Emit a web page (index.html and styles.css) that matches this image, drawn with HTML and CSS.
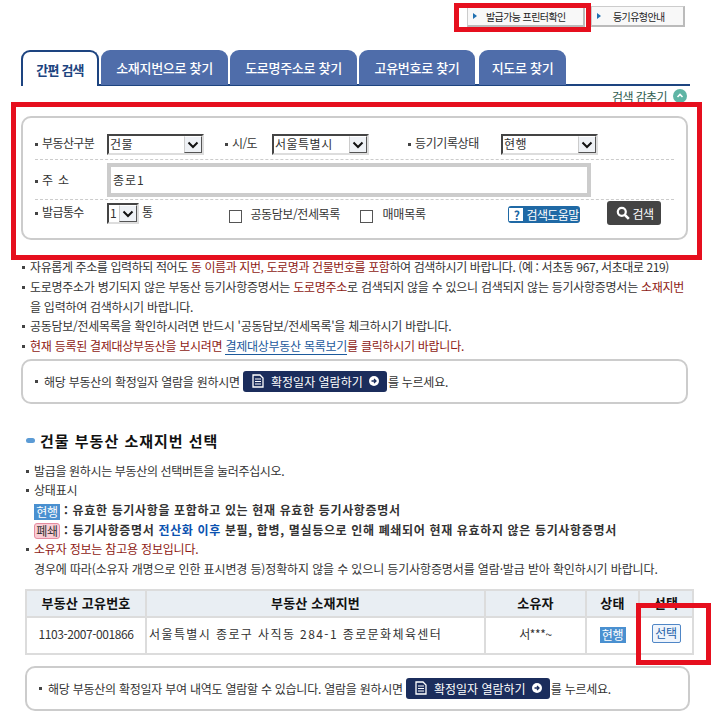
FILE: index.html
```html
<!DOCTYPE html>
<html lang="ko">
<head>
    <meta charset="UTF-8">
    <title>부동산 소재지번 선택</title>
    <link rel="stylesheet" href="styles.css">
</head>
<body>
<div class="page">

    <div class="top-links">
        <a class="top-link link-wide"><i class="mark"></i>발급가능 프린터확인</a>
        <a class="top-link link-narrow"><i class="mark"></i>등기유형안내</a>
    </div>

    <div class="tabs">
        <a class="tab tab-active">간편 검색</a>
        <a class="tab tab-a">소재지번으로 찾기</a>
        <a class="tab tab-a">도로명주소로 찾기</a>
        <a class="tab tab-b">고유번호로 찾기</a>
        <a class="tab tab-c">지도로 찾기</a>
    </div>

    <div class="hide-search">
        <span>검색 감추기</span>
        <svg width="14" height="14" viewBox="0 0 14 14"><circle cx="7" cy="7" r="7" fill="#5fb5a5"/><path d="M4.5 8 L7 5.5 L9.5 8" fill="none" stroke="#fff" stroke-width="1.6"/></svg>
    </div>

    <!-- search form -->
    <div class="search-box">
        <div class="row row-first">
            <span class="lbl lbl-first">부동산구분</span>
            <div class="sel sel-kind"><span>건물</span><b class="arrow"><svg width="12" height="8" viewBox="0 0 12 8"><path d="M1.5 1.5 L6 6 L10.5 1.5" fill="none" stroke="#111" stroke-width="2"/></svg></b></div>
            <span class="lbl lbl-city">시/도</span>
            <div class="sel sel-city"><span>서울특별시</span><b class="arrow"><svg width="12" height="8" viewBox="0 0 12 8"><path d="M1.5 1.5 L6 6 L10.5 1.5" fill="none" stroke="#111" stroke-width="2"/></svg></b></div>
            <span class="lbl lbl-state">등기기록상태</span>
            <div class="sel sel-state"><span>현행</span><b class="arrow"><svg width="12" height="8" viewBox="0 0 12 8"><path d="M1.5 1.5 L6 6 L10.5 1.5" fill="none" stroke="#111" stroke-width="2"/></svg></b></div>
        </div>
        <div class="row row-addr">
            <span class="lbl lbl-first lbl-addr">주 소</span>
            <div class="addr-input">종로1</div>
        </div>
        <div class="row row-last">
            <span class="lbl lbl-first lbl-count">발급통수</span>
            <div class="sel sel-count"><span>1</span><b class="arrow"><svg width="12" height="8" viewBox="0 0 12 8"><path d="M1.5 1.5 L6 6 L10.5 1.5" fill="none" stroke="#111" stroke-width="2"/></svg></b></div>
            <span class="unit">통</span>
            <i class="check check-one"></i>
            <span class="check-text text-one">공동담보/전세목록</span>
            <i class="check check-two"></i>
            <span class="check-text text-two">매매목록</span>
            <a class="help-btn"><b>?</b>검색도움말</a>
            <a class="search-btn"><svg width="14" height="14" viewBox="0 0 14 14"><circle cx="5.8" cy="5.8" r="4" fill="none" stroke="#fff" stroke-width="2.2"/><path d="M8.8 8.8 L12.8 12.8" stroke="#fff" stroke-width="2.6"/></svg>검색</a>
        </div>
    </div>

    <ul class="notes">
        <li class="note-first">자유롭게 주소를 입력하되 적어도 <em>동 이름과 지번, 도로명과 건물번호를 포함</em>하여 검색하시기 바랍니다. (예 : 서초동 967, 서초대로 219)</li>
        <li>도로명주소가 병기되지 않은 부동산 등기사항증명서는 <em>도로명주소</em>로 검색되지 않을 수 있으니 검색되지 않는 등기사항증명서는 <em>소재지번</em><br>을 입력하여 검색하시기 바랍니다.</li>
        <li>공동담보/전세목록을 확인하시려면 반드시 '공동담보/전세목록'을 체크하시기 바랍니다.</li>
        <li><em>현재 등록된 결제대상부동산을 보시려면</em> <a class="plain-link">결제대상부동산 목록보기</a><em>를 클릭하시기 바랍니다.</em></li>
    </ul>

    <div class="info-box info-top">
        <span class="dot"></span>해당 부동산의 확정일자 열람을 원하시면
        <a class="navy-btn"><svg width="14" height="14" viewBox="0 0 14 14"><path d="M2 1 H9 L12 4 V13 H2 Z" fill="none" stroke="#fff" stroke-width="1.3"/><path d="M4 5 H10 M4 7.5 H10 M4 10 H10" stroke="#fff"/></svg>확정일자 열람하기<svg width="10" height="10" viewBox="0 0 10 10"><circle cx="5" cy="5" r="5" fill="#fff"/><path d="M2.5 5 H7 M5 3 L7 5 L5 7" fill="none" stroke="#1b2d5c" stroke-width="1.3"/></svg></a>
        를 누르세요.
    </div>

    <h3 class="section-title"><i class="pill"></i>건물 부동산 소재지번 선택</h3>

    <ul class="status-list">
        <li class="status-first">발급을 원하시는 부동산의 선택버튼을 눌러주십시오.</li>
        <li>상태표시</li>
        <li class="plain-row"><span class="badge badge-live">현행</span> : 유효한 등기사항을 포함하고 있는 현재 유효한 등기사항증명서</li>
        <li class="plain-row"><span class="badge badge-dead">폐쇄</span> : 등기사항증명서 <span class="blue">전산화 이후</span> 분필, 합병, 멸실등으로 인해 폐쇄되어 현재 유효하지 않은 등기사항증명서</li>
        <li><em>소유자 정보는 참고용 정보입니다.</em></li>
        <li class="no-mark status-last">경우에 따라(소유자 개명으로 인한 표시변경 등)정확하지 않을 수 있으니 등기사항증명서를 열람·발급 받아 확인하시기 바랍니다.</li>
    </ul>

    <table class="result">
        <colgroup><col class="c1"><col class="c2"><col class="c3"><col class="c4"><col class="c5"></colgroup>
        <tr>
            <th>부동산 고유번호</th>
            <th>부동산 소재지번</th>
            <th>소유자</th>
            <th>상태</th>
            <th>선택</th>
        </tr>
        <tr>
            <td>1103-2007-001866</td>
            <td class="addr">서울특별시 종로구 사직동 284-1 종로문화체육센터</td>
            <td>서***~</td>
            <td><span class="badge badge-live badge-flat">현행</span></td>
            <td><a class="pick-btn">선택</a></td>
        </tr>
    </table>

    <div class="info-box info-bottom">
        <span class="dot"></span>해당 부동산의 확정일자 부여 내역도 열람할 수 있습니다. 열람을 원하시면
        <a class="navy-btn"><svg width="14" height="14" viewBox="0 0 14 14"><path d="M2 1 H9 L12 4 V13 H2 Z" fill="none" stroke="#fff" stroke-width="1.3"/><path d="M4 5 H10 M4 7.5 H10 M4 10 H10" stroke="#fff"/></svg>확정일자 열람하기<svg width="10" height="10" viewBox="0 0 10 10"><circle cx="5" cy="5" r="5" fill="#fff"/><path d="M2.5 5 H7 M5 3 L7 5 L5 7" fill="none" stroke="#1b2d5c" stroke-width="1.3"/></svg></a>
        를 누르세요.
    </div>

    <!-- red annotation boxes drawn on top of the capture -->
    <div class="mark-box mark-printer"></div>
    <div class="mark-box mark-search"></div>
    <div class="mark-box mark-pick"></div>
</div>
</body>
</html>
```

FILE: styles.css
```css
* {
    box-sizing: border-box;
}
body {
    margin: 0;
    font-family: "Noto Sans CJK KR", "Noto Sans", sans-serif;
    font-size: 12px;
    letter-spacing: -0.6px;
    color: #333;
    background: #fff;
}
em {
    font-style: normal;
    color: #8e1a14;
}
ul {
    list-style: none;
    margin: 0;
    padding: 0;
}
.page {
    position: relative;
    width: 720px;
    height: 715px;
    overflow: hidden;
}

/* top links */
.top-links {
    display: flex;
    justify-content: flex-end;
    gap: 6px;
    padding: 6px 35px 0 0;
}
.top-link {
    display: flex;
    align-items: center;
    height: 21px;
    font-size: 10px;
    color: #222;
    background: #f8f8f8;
    border: 1px solid #ccc;
    border-right: 2px solid #bbb;
    border-bottom: 2px solid #bbb;
}
.link-wide {
    width: 118px;
}
.link-narrow {
    width: 94px;
}
.mark {
    width: 0;
    height: 0;
    margin: 0 12px 0 5px;
    border-left: 4px solid #1f6fb0;
    border-top: 3px solid transparent;
    border-bottom: 3px solid transparent;
}
.link-wide .mark {
    margin-right: 9px;
}

/* tabs */
.tabs {
    display: flex;
    gap: 2px;
    width: 669px;
    height: 36px;
    margin: 23px 0 0 21px;
    align-items: flex-start;
    border-bottom: 2px solid #1d4480;
}
.tab {
    display: flex;
    align-items: center;
    justify-content: center;
    height: 35px;
    font-size: 13px;
    font-weight: 500;
    letter-spacing: -0.3px;
    color: #fff;
    background: #4f6daa;
    border-radius: 9px 9px 0 0;
}
.tab-active {
    width: 78px;
    height: 36px;
    font-weight: 700;
    letter-spacing: -0.8px;
    color: #1d4480;
    background: #fff;
    border: 2px solid #1d4480;
    border-bottom: none;
}
.tab-a {
    width: 127px;
}
.tab-b {
    width: 116px;
}
.tab-c {
    width: 87px;
    margin-left: 2px;
}

.hide-search {
    display: flex;
    justify-content: flex-end;
    align-items: center;
    gap: 6px;
    height: 14px;
    margin-top: 3px;
    padding-right: 33px;
    color: #2f5d50;
}

/* search form */
.search-box {
    width: 667px;
    height: 124px;
    margin: 13px 0 0 21px;
    padding: 0 12px;
    background: #fff;
    border: 2px solid #ccc;
    border-radius: 10px;
}
.row {
    display: flex;
    align-items: center;
    border-bottom: 1px dashed #ccc;
}
.row-first {
    align-items: flex-start;
    height: 42px;
    padding-top: 16px;
}
.row-addr {
    height: 40px;
}
.row-last {
    align-items: flex-start;
    border-bottom: none;
}
.lbl::before {
    content: "";
    display: inline-block;
    width: 3px;
    height: 3px;
    margin-right: 4px;
    vertical-align: middle;
    background: #444;
}
.lbl-first {
    width: 72px;
    flex: none;
}
.lbl-addr {
    letter-spacing: 0.8px;
}
.lbl-count {
    margin-top: 3px;
}
.lbl-city {
    margin-left: 21px;
    width: 47px;
}
.lbl-state {
    margin-left: 39px;
    width: 93px;
    letter-spacing: -0.4px;
}
.sel {
    display: flex;
    justify-content: space-between;
    height: 21px;
    padding-left: 1px;
    line-height: 15px;
    letter-spacing: 0.5px;
    background: #fff;
    border: 2px solid;
    border-color: #444 #ddd #ddd #444;
}
.sel-kind,
.sel-city,
.sel-state {
    width: 97px;
}
.sel-count {
    width: 32px;
    margin-top: 3px;
}
.arrow {
    display: flex;
    align-items: center;
    justify-content: center;
    width: 18px;
    height: 17px;
    background: #eef1f5;
    border: 1px solid;
    border-color: #fff #555 #555 #ccc;
}
.addr-input {
    width: 484px;
    height: 34px;
    padding-left: 2px;
    line-height: 26px;
    letter-spacing: 1px;
    border: 4px solid #ccc;
}
.unit {
    margin: 3px 0 0 3px;
}
.check {
    width: 13px;
    height: 13px;
    margin-top: 10px;
    border: 1px solid #555;
    background: #fff;
}
.check-one {
    margin-left: 77px;
}
.check-two {
    margin-left: 18px;
}
.check-text {
    margin-top: 5px;
    margin-left: 8px;
    letter-spacing: -0.4px;
    white-space: nowrap;
}
.text-one {
    width: 92px;
}
.text-two {
    width: 43px;
    margin-left: 9px;
    letter-spacing: -0.2px;
}
.help-btn {
    display: flex;
    align-items: center;
    width: 72px;
    height: 17px;
    margin: 6px 0 0 83px;
    color: #fff;
    letter-spacing: -0.6px;
    white-space: nowrap;
    background: #1f69a5;
    border-radius: 3px;
}
.help-btn b {
    display: flex;
    align-items: center;
    justify-content: center;
    width: 14px;
    height: 13px;
    margin: 0 3px 0 1px;
    color: #1f69a5;
    background: #fff;
}
.search-btn {
    display: flex;
    align-items: center;
    gap: 2px;
    height: 24px;
    width: 54px;
    margin: 1px 0 0 27px;
    padding-left: 9px;
    color: #fff;
    background: #444;
    border-radius: 3px;
}

/* notes */
.notes {
    margin: 17px 0 0 30px;
    line-height: 19.75px;
    letter-spacing: -0.27px;
}
.notes .note-first {
    letter-spacing: -0.4px;
}
.notes li {
    position: relative;
}
.notes li::before,
.status-list li::before {
    content: "";
    position: absolute;
    left: -8px;
    top: 9px;
    width: 3px;
    height: 3px;
    background: #444;
}
.plain-link {
    color: #1c5a9c;
    border-bottom: 1px solid #1c5a9c;
}

/* info boxes */
.info-box {
    display: flex;
    align-items: center;
    gap: 3px;
    height: 45px;
    padding-left: 12px;
    background: #fff;
    border: 2px solid #ccc;
    border-radius: 10px;
}
.info-top {
    width: 667px;
    margin: 3px 0 0 21px;
    letter-spacing: -0.25px;
}
.info-bottom {
    width: 665px;
    margin: 11px 0 0 25px;
    letter-spacing: -0.25px;
}
.dot {
    width: 3px;
    height: 3px;
    margin-right: 3px;
    background: #444;
}
.navy-btn {
    display: flex;
    align-items: center;
    justify-content: center;
    gap: 6px;
    width: 144px;
    height: 21px;
    margin-right: -2px;
    letter-spacing: 0;
    color: #fff;
    background: #1b2d5c;
    border-radius: 3px;
}

/* heading and status list */
.section-title {
    display: flex;
    align-items: center;
    gap: 5px;
    height: 20px;
    margin: 27px 0 0 26px;
    font-size: 15px;
    font-weight: 700;
    letter-spacing: 1px;
    color: #111;
}
.pill {
    width: 9px;
    height: 5px;
    background: #5b9bd5;
    border-radius: 3px;
}
.status-list {
    margin: 10px 0 0 34px;
    line-height: 19.6px;
    letter-spacing: -0.2px;
}
.status-list .status-first {
    letter-spacing: -0.35px;
}
.status-list .status-last {
    letter-spacing: -0.13px;
}
.status-list li {
    position: relative;
}
.status-list .plain-row {
    font-weight: 700;
    letter-spacing: 0.65px;
}
.status-list .plain-row::before,
.status-list .no-mark::before {
    display: none;
}
.blue {
    color: #0b52b0;
}
.badge {
    display: inline-block;
    width: 26px;
    height: 16px;
    line-height: 16px;
    text-align: center;
    font-weight: 400;
    letter-spacing: -0.3px;
    color: #fff;
    background: #4a90d0;
    vertical-align: middle;
}
.badge-dead {
    color: #333;
    background: #f9cdd6;
    border: 1px solid #e58ca0;
    border-radius: 3px;
    line-height: 14px;
}

/* result table */
.result {
    table-layout: fixed;
    width: 667px;
    margin: 10px 0 0 25px;
    border-collapse: collapse;
    border: 2px solid #dcdcdc;
    text-align: center;
}
.c1 { width: 120px; }
.c2 { width: 339px; }
.c3 { width: 101px; }
.c4 { width: 53px; }
.c5 { width: 54px; }
.result th,
.result td {
    padding: 0;
    border: 2px solid #dcdcdc;
}
.result th {
    height: 27px;
    padding-bottom: 2px;
    font-size: 13px;
    letter-spacing: 0.2px;
    color: #111;
    background: #e9eef3;
}
.result td {
    height: 37px;
    padding-bottom: 3px;
    letter-spacing: -0.4px;
}
.result .addr {
    text-align: left;
    padding-left: 2px;
    letter-spacing: 1.4px;
}
.pick-btn {
    display: inline-block;
    width: 29px;
    height: 19px;
    line-height: 16px;
    color: #1d5fa8;
    background: #eef4fc;
    border: 1px solid #4f86c6;
    border-radius: 2px;
}

/* red annotation boxes */
.mark-box {
    position: absolute;
    border: 5px solid #e60f1e;
}
.mark-printer {
    left: 454px;
    top: 3px;
    width: 137px;
    height: 29px;
}
.mark-search {
    left: 11px;
    top: 102px;
    width: 691px;
    height: 158px;
}
.mark-pick {
    left: 636px;
    top: 603px;
    width: 75px;
    height: 62px;
}
```
